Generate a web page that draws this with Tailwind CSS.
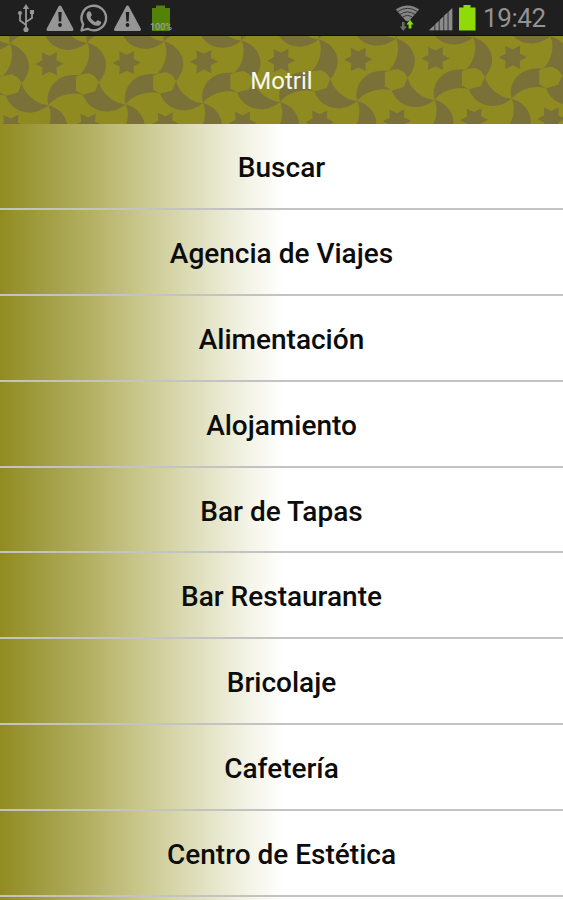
<!DOCTYPE html>
<html lang="es">
<head>
<meta charset="utf-8">
<title>Motril</title>
<script src="https://cdn.jsdelivr.net/npm/@tailwindcss/browser@4"></script>
</head>
<body class="w-[563px] h-[900px] overflow-hidden bg-white font-[Roboto,sans-serif]">
<div class="flex h-[36px] items-center justify-between bg-[#1f1f1f] border-b border-[#0c0c14]">
  <svg class="h-[35px] w-[180px]" viewBox="0 0 180 35">
    <g fill="none" stroke="#969696" stroke-width="1.8">
      <path d="M26 6V30M26 25L20 20.5V13M26 22L32 18V12"/>
    </g>
    <g fill="#969696">
      <path d="M26 4l3.2 5h-6.400z"/><circle cx="26" cy="29.500" r="2.600"/><circle cx="20" cy="13" r="2.100"/><rect x="30" y="10" width="4" height="4"/>
    </g>
    <g id="warn">
      <path d="M60 7L72 29.500H48Z" fill="#969696" stroke="#969696" stroke-width="3" stroke-linejoin="round"/>
      <path d="M58.300 12h3.400l-.5 9.500h-2.400z" fill="#1f1f1f"/><circle cx="60" cy="25" r="1.900" fill="#1f1f1f"/>
    </g>
    <use href="#warn" x="67.500"/>
    <path d="M81.500 30.500L83.200 24.300A12.300 12.300 0 1 1 87.800 28.800Z" fill="none" stroke="#969696" stroke-width="2.300" stroke-linejoin="round"/>
    <path d="M87.500 12.200c1-1.400 2.600-1.300 3.100-.2l1.200 2.800c.3.800-1.300 2-1.300 2.500.8 2 2.800 3.900 5 4.700.7.100 1.700-1.900 2.500-1.700l3 1.500c.8.500-.2 3-1.700 3.600-3.300 1.500-7.800-1-10.300-4.200-2.300-2.900-3.300-6.500-1.500-9z" fill="#969696"/>
    <path d="M156 5.500h9V8h5V31H152V8h4z" fill="#538208"/>
    <text x="161" y="30" text-anchor="middle" textLength="22" lengthAdjust="spacingAndGlyphs" font-size="8.500" font-weight="500" fill="#9ba597" font-family="Roboto,sans-serif">100%</text>
  </svg>
  <div class="flex items-center">
    <svg class="h-[35px] w-[92px]" viewBox="391 0 92 35">
      <path d="M395.800 9.500Q407.500 1.500 419.200 9.500L409.500 20.500Q407.500 22 405.500 20.500Z" fill="#858585"/>
      <g fill="none" stroke="#2c2c2c" stroke-width=".9">
        <path d="M397.500 11.600Q407.500 5 417.500 11.600M400 14.500Q407.500 9.300 415 14.500M402.500 17.300Q407.500 13.600 412.500 17.300"/>
      </g>
      <path d="M402 22h2.500v4.500h2.300L403.300 31l-3.600-4.500h2.300z" fill="#6c6c6c"/>
      <path d="M408.600 28.500v-4h-2.200l3.600-4.800 3.600 4.800h-2.200v4z" fill="#86dc00"/>
      <path d="M429 30.300L452.300 8V30.300Z" fill="#505050"/>
      <g fill="#8b8b8b"><path d="M429 30.300l5-4.800v4.800zM435.500 24l3-2.800v9.100h-3zM440 19.800l3-2.900v13.400h-3zM444.300 15.600l3-2.900v17.600h-3zM448.800 11.400l3.500-3.400v22.300h-3.500z"/></g>
      <path d="M463.500 5h7v2.500h5V30.500H459V7.500h4.500z" fill="#8fdb08"/>
    </svg>
    <div class="mr-[17px] w-[63px] whitespace-nowrap pt-px text-[26px] leading-[34px] tracking-[-0.4px] text-[#929292]">19:42</div>
  </div>
</div>
<header class="relative h-[88px] overflow-hidden bg-[#8f8b20]">
  <svg class="absolute inset-0 h-full w-full" viewBox="0 36 563 88">
    <defs>
      <g id="cell">
        <path d="M0 -44.500C16 -40 27 -20 12 -2C14 9 26 21 38.540 22.250C26.640 33.860 3.820 33.380 -4.270 11.390C-14.790 7.620 -31.190 12.020 -38.540 22.250C-42.640 6.140 -30.820 -13.380 -7.730 -9.390C.79 -16.620 5.190 -33.020 0 -44.500Z" fill="#7a7138"/>
        <path d="M-11 -8L-5 -10.500L2 -11.500L8 -8L12 -2L8 8L-4 11.500L-11 7Z" fill="#8f8b20"/>
        <path transform="translate(-37.500 -22.250)" d="M14 0L7 3.900L7.500 12.500L0 8.500L-7.500 12.500L-7 3.900L-14 0L-7 -3.900L-7.500 -12.500L0 -8.500L7.500 -12.500L7 -3.900Z" fill="#7a7138"/>
      </g>
      <g id="row">
        <use href="#cell" x="-77.200"/><use href="#cell"/><use href="#cell" x="77.200"/><use href="#cell" x="154.400"/><use href="#cell" x="231.600"/><use href="#cell" x="308.800"/><use href="#cell" x="386"/><use href="#cell" x="463.200"/><use href="#cell" x="540.400"/>
      </g>
    </defs>
    <g transform="matrix(1 -.014 0 .93 87 84)">
      <use href="#row" x="-38.600" y="-66.750"/>
      <use href="#row"/>
      <use href="#row" x="-38.600" y="66.750"/>
    </g>
  </svg>
  <h1 class="relative text-center text-[24px] leading-[90px] text-[#f8f8f2]">Motril</h1>
</header>
<ul class="flex flex-col bg-[linear-gradient(90deg,#918c20_0,#9b9738_28px,#b1ae5f_85px,#c9c78c_140px,#dedebb_195px,#f2f2e4_245px,#ffffff_284px)] text-center text-[28px] font-medium leading-[88px] text-[#0c0c0c]">
  <li class="h-[85.900px] border-b-2 border-[#c3c3c1]">Buscar</li>
  <li class="h-[85.900px] border-b-2 border-[#c3c3c1]">Agencia de Viajes</li>
  <li class="h-[85.900px] border-b-2 border-[#c3c3c1]">Alimentación</li>
  <li class="h-[85.900px] border-b-2 border-[#c3c3c1]">Alojamiento</li>
  <li class="h-[85.900px] border-b-2 border-[#c3c3c1]">Bar de Tapas</li>
  <li class="h-[85.900px] border-b-2 border-[#c3c3c1]">Bar Restaurante</li>
  <li class="h-[85.900px] border-b-2 border-[#c3c3c1]">Bricolaje</li>
  <li class="h-[85.900px] border-b-2 border-[#c3c3c1]">Cafetería</li>
  <li class="h-[85.900px] overflow-hidden border-b-2 border-[#c3c3c1]">Centro de Estética</li>
  <li class="h-[2.900px]"></li>
</ul>
</body>
</html>
